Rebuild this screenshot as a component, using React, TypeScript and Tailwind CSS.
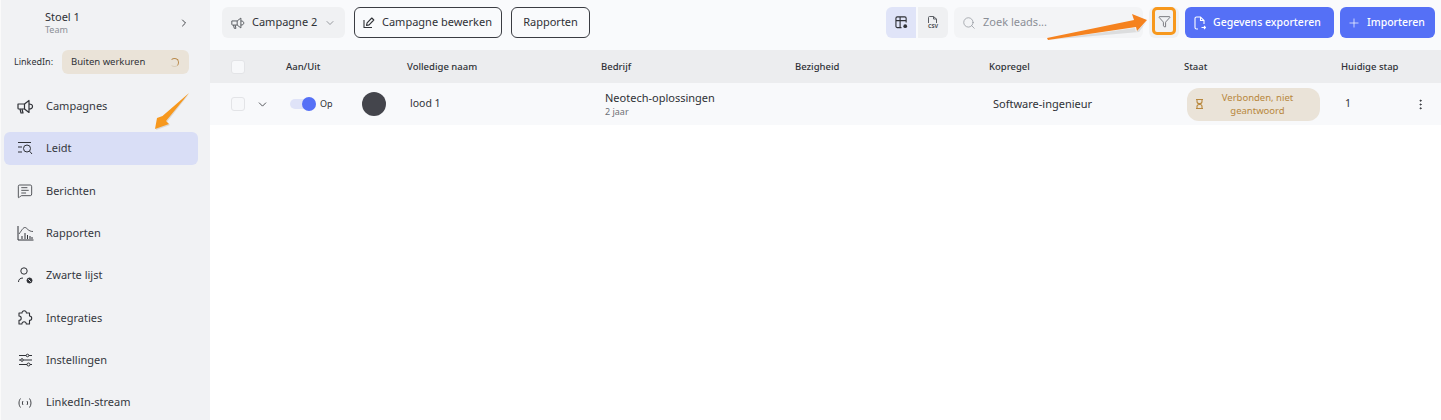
import { ChevronDown, ChevronRight, EllipsisVertical, Funnel, MessageSquareText, Plus, Search } from "lucide-react"
import { ReactNode } from "react"

const MegaphoneIcon = ({ size = 17 }: { size?: number }) => (
  <svg width={size} height={size} viewBox="0 0 17 16" fill="none" stroke="currentColor" strokeWidth="1.200" strokeLinejoin="round">
    <path d="M1 5.500h6.500v5H1.800a.8.8 0 0 1-.8-.8z" />
    <path d="M7.500 5.500L12 2v12L7.500 10.500" />
    <path d="M12 5.500c2.500 0 3.500 1 3.500 2.500s-1 2.500-3.500 2.500" />
    <path d="M3 10.500l1 4h2l-1-4" />
  </svg>
)

const LeadsIcon = () => (
  <svg width="16" height="14" viewBox="0 0 16 14" fill="none" stroke="currentColor" strokeWidth="1">
    <path d="M1 1.500h13M1 6h4M1 11h4" />
    <circle cx="10" cy="7.500" r="3.500" />
    <path d="M12.600 10.200l2.400 2.800" />
  </svg>
)

const ChartIcon = () => (
  <svg width="17" height="16" viewBox="0 0 17 16" fill="none" stroke="currentColor" strokeWidth="1">
    <path d="M1 1v14h15.500" />
    <path d="M2 9C5 5 6 2.500 8 2.500S11 6.500 16 6.500" strokeWidth=".8" />
    <path d="M5 14v-3M8 14V8M10.500 14v-4M13 14v-3M15 14v-2" />
  </svg>
)

const BlockedIcon = () => (
  <svg width="16" height="17" viewBox="0 0 16 17" fill="none" stroke="currentColor" strokeWidth="1">
    <circle cx="7" cy="4" r="3.200" />
    <path d="M1.500 15c0-2.500 1.500-4 4.500-4" />
    <circle cx="12.500" cy="13.500" r="2.500" fill="currentColor" />
    <path d="M11.300 12.300l2.400 2.400" stroke="#f1f2f4" />
  </svg>
)

const PuzzleIcon = () => (
  <svg width="17" height="17" viewBox="0 0 17 17" fill="none" stroke="currentColor" strokeWidth="1.100" strokeLinejoin="round">
    <path d="M2 4h3a2.200 2.200 0 1 1 4.400 0h3.100v3a2.200 2.200 0 1 1 0 4.400V15H9.300a2.200 2.200 0 1 0-4.400 0H2v-3.600a2.200 2.200 0 1 0 0-4.400z" />
  </svg>
)

const SlidersIcon = () => (
  <svg width="15" height="14" viewBox="0 0 15 14" fill="none" stroke="currentColor" strokeWidth="1">
    <path d="M1 2.500h7M11 2.500h3M1 7h1.500M5.500 7H14M1 11.500h8M12 11.500h2" />
    <circle cx="9.500" cy="2.500" r="1.300" />
    <circle cx="4" cy="7" r="1.300" />
    <circle cx="10.500" cy="11.500" r="1.500" />
  </svg>
)

const StreamIcon = () => (
  <svg width="14" height="10" viewBox="0 0 14 10" fill="none" stroke="currentColor" strokeWidth=".9">
    <path d="M2.500 .5C.5 3 .5 7 2.500 9.500M11.500 .5c2 2.500 2 6.500 0 9M5 3c-.8 1.200-.8 2.800 0 4M9 3c.8 1.200.8 2.800 0 4" />
  </svg>
)

const PenIcon = () => (
  <svg width="12" height="12" viewBox="0 0 12 12" fill="none" stroke="currentColor" strokeWidth="1.100" strokeLinejoin="round">
    <path d="M1 3v7.500h8" />
    <path d="M3.500 8.500l.6-2.700L8.800 1l2 2-4.700 4.900z" />
  </svg>
)

const TableIcon = () => (
  <svg width="13" height="13" viewBox="0 0 14 14" fill="none" stroke="#2f3136" strokeWidth="1.200">
    <path d="M7 12.500H2.500a1.500 1.500 0 0 1-1.500-1.500V2.500A1.500 1.500 0 0 1 2.500 1h8A1.500 1.500 0 0 1 12 2.500V7M1 5h11M5.500 1v11.500" />
    <circle cx="11" cy="11" r="2" fill="#2f3136" stroke="none" />
  </svg>
)

const CsvIcon = () => (
  <div className="flex flex-col items-center">
    <svg width="9" height="7" viewBox="0 0 9 7" fill="none" stroke="#5b5e64" strokeWidth="1">
      <path d="M.5 7V1.500a1 1 0 0 1 1-1h4L8.500 3v4M5.500 .5V3h3" />
    </svg>
    <span className="text-[5.500px] leading-[6px] font-bold text-[#4b4e54]">CSV</span>
  </div>
)

const ExportIcon = () => (
  <svg width="12" height="14" viewBox="0 0 12 14" fill="none" stroke="white" strokeWidth="1.100">
    <path d="M4 13H2.500a1.500 1.500 0 0 1-1.500-1.500v-9A1.500 1.500 0 0 1 2.500 1h4L10 4.500V8M6.500 1v3.500H10M7.500 11.500h4M10 10l1.500 1.500L10 13" />
  </svg>
)

const HourglassIcon = () => (
  <svg width="7" height="10" viewBox="0 0 7 10" fill="none" stroke="currentColor" strokeWidth="1.100">
    <path d="M0 .5h7M0 9.500h7M1 .5v2a2 2 0 0 0 2 2h1a2 2 0 0 0 2-2v-2M1 9.500v-2a2 2 0 0 1 2-2h1a2 2 0 0 1 2 2v2" />
  </svg>
)

const nav: { label: string; icon: ReactNode; active?: boolean }[] = [
  { label: "Campagnes", icon: <MegaphoneIcon /> },
  { label: "Leidt", icon: <LeadsIcon />, active: true },
  { label: "Berichten", icon: <MessageSquareText size={16} strokeWidth={1.2} /> },
  { label: "Rapporten", icon: <ChartIcon /> },
  { label: "Zwarte lijst", icon: <BlockedIcon /> },
  { label: "Integraties", icon: <PuzzleIcon /> },
  { label: "Instellingen", icon: <SlidersIcon /> },
  { label: "LinkedIn-stream", icon: <StreamIcon /> },
]

const Sidebar = () => (
  <div className="w-[210px] shrink-0 h-[420px] overflow-hidden bg-[#f1f2f4] border-l border-[#fafafa] text-[#2f3136]">
    <div className="flex items-center justify-between pl-[44px] pr-[20px] h-[46px]">
      <div>
        <p className="text-[11px] leading-[13px]">Stoel 1</p>
        <p className="text-[9px] leading-[13px] text-[#8b8f96]">Team</p>
      </div>
      <ChevronRight size={12} strokeWidth={1.8} />
    </div>
    <div className="flex items-center gap-[8px] pl-[13px] mt-[4px] h-[24px]">
      <span className="text-[9px] w-[40px]">LinkedIn:</span>
      <div className="w-[127px] h-[24px] rounded-[6px] bg-[#eae3d8] flex items-center justify-between pl-[9px] pr-[10px]">
        <span className="text-[9.500px]">Buiten werkuren</span>
        <div className="w-[9px] h-[9px] rounded-full border border-[#b98a4a] border-l-transparent border-b-[#d9cdb9]" />
      </div>
    </div>
    <div className="flex flex-col gap-[9.400px] mt-[15.500px] pl-[3px] pr-[12px]">
      {nav.map(item => (
        <div key={item.label} className={`flex items-center h-[33px] rounded-[6px] pl-[12px] ${item.active ? "bg-[#d9def6]" : ""}`}>
          <div className="w-[18px] flex justify-center text-[#2f3136]">{item.icon}</div>
          <span className="ml-[12px] text-[11px] text-[#35383e]">{item.label}</span>
        </div>
      ))}
    </div>
  </div>
)

const Toolbar = () => (
  <div className="h-[50px] bg-[#f9fafc] flex items-start pt-[7px] pl-[12px] text-[11px] text-[#2f3136]">
    <div className="w-[123px] h-[31px] rounded-[6px] bg-[#f0f1f3] flex items-center pl-[9px]">
      <div className="text-[#5b5e64]"><MegaphoneIcon size={14} /></div>
      <span className="ml-[7px]">Campagne 2</span>
      <ChevronDown size={12} strokeWidth={1.2} className="ml-[7px] text-[#5b5e64]" />
    </div>
    <div className="ml-[9px] w-[148px] h-[31px] rounded-[6px] border border-[#3a3c42] flex items-center pl-[8px]">
      <PenIcon />
      <span className="ml-[7px]">Campagne bewerken</span>
    </div>
    <div className="ml-[9px] w-[79px] h-[31px] rounded-[6px] border border-[#3a3c42] flex items-center justify-center">
      Rapporten
    </div>
    <div className="ml-auto mr-[6px] flex items-center">
      <div className="w-[30px] h-[31px] rounded-l-[6px] bg-[#e0e4f8] flex items-center justify-center">
        <TableIcon />
      </div>
      <div className="ml-[2px] w-[30px] h-[31px] rounded-r-[6px] bg-[#eff0f2] flex items-center justify-center">
        <CsvIcon />
      </div>
      <div className="ml-[6px] w-[189px] h-[31px] rounded-[6px] bg-[#f3f4f6] flex items-center pl-[8px] text-[#8b8f96]">
        <Search size={14} strokeWidth={1.2} />
        <span className="ml-[7px]">Zoek leads...</span>
      </div>
      <div className="ml-[6px] w-[30px] h-[31px] rounded-[6px] bg-[#f0f1f3] flex justify-center items-start">
        <div className="w-[24px] h-[28px] rounded-[5px] border-[3px] border-[#f7981d] flex items-center justify-center">
          <Funnel size={13} strokeWidth={1.2} className="text-[#3a3c42]" />
        </div>
      </div>
      <div className="ml-[6px] w-[149px] h-[31px] rounded-[6px] bg-[#5570f6] flex items-center pl-[9px] text-white">
        <ExportIcon />
        <span className="ml-[7px] text-[10.500px] font-medium">Gegevens exporteren</span>
      </div>
      <div className="ml-[6px] w-[95px] h-[31px] rounded-[6px] bg-[#5570f6] flex items-center pl-[7px] text-white">
        <Plus size={14} strokeWidth={1.2} />
        <span className="ml-[6px] text-[10.500px] font-medium">Importeren</span>
      </div>
    </div>
  </div>
)

const colsClass = "grid grid-cols-[21px_55px_121px_194px_194px_194px_195px_157px_100px]"

const Checkbox = () => <div className="w-[14px] h-[14px] rounded-[3px] border border-[#e3e4e7] bg-[#f7f8fa]" />

const Table = () => (
  <div>
    <div className={`${colsClass} h-[33px] items-center bg-[#ecedef] text-[9.500px] font-medium text-[#2f3136]`}>
      <div />
      <div><Checkbox /></div>
      <div className="pt-[1px]">Aan/Uit</div>
      <div className="pt-[1px]">Volledige naam</div>
      <div className="pt-[1px]">Bedrijf</div>
      <div className="pt-[1px]">Bezigheid</div>
      <div className="pt-[1px]">Kopregel</div>
      <div className="pt-[1px]">Staat</div>
      <div className="pt-[1px]">Huidige stap</div>
    </div>
    <div className={`${colsClass} h-[42px] items-center bg-[#f8f9fb] text-[10.500px] text-[#2f3136]`}>
      <div />
      <div className="flex items-center gap-[11px] w-[40px]">
        <Checkbox />
        <ChevronDown size={13} strokeWidth={1.500} />
      </div>
      <div className="flex items-center">
        <div className="relative w-[26px] h-[10px] ml-[4px] rounded-full bg-[#dfe3f8]">
          <div className="absolute right-0 -top-[2px] w-[14px] h-[14px] rounded-full bg-[#5570f6]" />
        </div>
        <span className="ml-[4px] text-[9px]">Op</span>
        <div className="ml-[29px] w-[24px] h-[24px] shrink-0 rounded-full bg-[#44454c]" />
      </div>
      <div className="pl-[3px]">lood 1</div>
      <div className="pl-[4px]">
        <p className="text-[11px] leading-[14px]">Neotech-oplossingen</p>
        <p className="text-[9px] leading-[13px] text-[#6b6e75]">2 jaar</p>
      </div>
      <div />
      <div className="pl-[4px] text-[11px]">Software-ingenieur</div>
      <div className="pl-[3px]">
        <div className="w-[133px] h-[33px] rounded-[12px] bg-[#eae3d8] flex items-center pl-[9px] text-[#b8873c]">
          <HourglassIcon />
          <span className="flex-1 pr-[8px] text-center text-[9.500px] leading-[13px]">Verbonden, niet geantwoord</span>
        </div>
      </div>
      <div className="flex items-center justify-between pl-[4px] pr-[10px] w-[96px]">
        <span>1</span>
        <EllipsisVertical size={13} strokeWidth={1.800} />
      </div>
    </div>
  </div>
)

// annotation arrows pasted on the screenshot
const Arrows = () => (
  <>
    <svg className="absolute left-[150px] top-[90px]" width="44" height="44" viewBox="0 0 44 44">
      <path d="M39 4L17 32l3 3L6 40l2-11 5-2z" fill="#a08a70" opacity=".25" />
      <path d="M39 3L16 31l3 3L5 39l2-11 5.500-2z" fill="#f7981d" />
    </svg>
    <svg className="absolute left-[1044px] top-[10px]" width="106" height="32" viewBox="0 0 106 32">
      <path d="M3 30l88-12 1 4 11-11-8 11z" fill="#777" opacity=".18" />
      <path d="M3 28L90 10l-2-6 15 6-10 11-1-4L4 30z" fill="#f5821f" />
    </svg>
  </>
)

export default function App() {
  return (
    <div className="relative w-[1441px] h-[420px] flex bg-white overflow-hidden" style={{ fontFamily: '"Noto Sans", sans-serif' }}>
      <Sidebar />
      <div className="flex-1 min-w-0">
        <Toolbar />
        <Table />
      </div>
      <Arrows />
    </div>
  )
}
